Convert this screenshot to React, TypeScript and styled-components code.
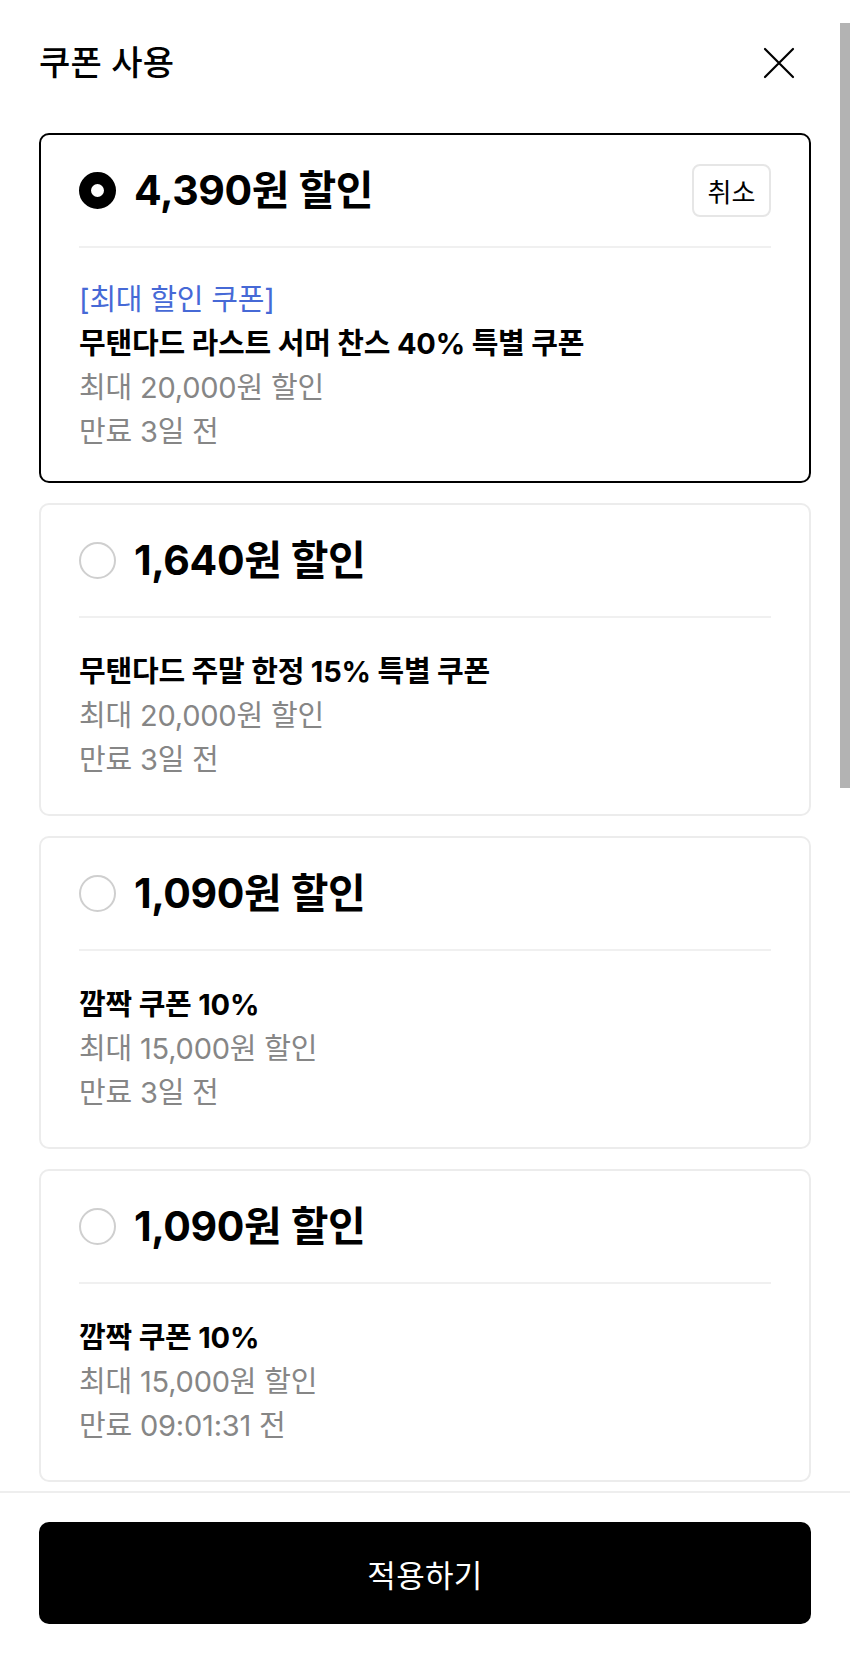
import React from "react";
import styled, { createGlobalStyle } from "styled-components";

const GlobalStyle = createGlobalStyle`
  html, body { margin: 0; padding: 0; background: #fff; }
  body { font-family: Inter, "Noto Sans CJK KR", "Noto Sans", sans-serif; color: #000; }
  * { box-sizing: border-box; }
`;

const Page = styled.div`
  position: relative;
  height: 100vh;
  display: flex;
  flex-direction: column;
  overflow: hidden;
`;

const Header = styled.header`
  height: 126px;
  flex-shrink: 0;
  display: flex;
  align-items: center;
  justify-content: space-between;
  padding: 0 47px 0 39px;
`;

const Title = styled.h1`
  margin: 0;
  font-size: 34px;
  font-weight: 500;
  letter-spacing: 0.2px;
  line-height: 1;
`;

const CloseButton = styled.button`
  width: 48px;
  height: 48px;
  padding: 0;
  border: none;
  background: none;
  display: flex;
  align-items: center;
  justify-content: center;
  cursor: pointer;
`;

const List = styled.main`
  flex: 1;
  min-height: 0;
  overflow: hidden;
  display: flex;
  flex-direction: column;
  gap: 20px;
  padding: 7px 39px 9px;
`;

const Card = styled.section<{ $selected?: boolean }>`
  flex-shrink: 0;
  border: ${(p) => (p.$selected ? "2px solid #000" : "2px solid #ececec")};
  border-radius: 10px;
  padding: 0 38px;
  background: #fff;
`;

const CardHeader = styled.div`
  height: 113px;
  display: flex;
  align-items: center;
  justify-content: space-between;
  border-bottom: 2px solid #f0f0f0;
`;

const HeaderLeft = styled.div`
  display: flex;
  align-items: center;
  gap: 18px;
`;

const Radio = styled.span<{ $checked?: boolean }>`
  width: 37px;
  height: 37px;
  border-radius: 50%;
  flex-shrink: 0;
  border: ${(p) => (p.$checked ? "12px solid #000" : "2px solid #cfcfcf")};
  background: #fff;
`;

const Amount = styled.div`
  font-size: 41px;
  font-weight: 700;
  letter-spacing: -0.4px;
  line-height: 1;
`;

const CancelButton = styled.button`
  width: 79px;
  height: 53px;
  border: 2px solid #e6e6e6;
  border-radius: 8px;
  background: #fff;
  font-family: inherit;
  font-size: 26px;
  font-weight: 400;
  color: #000;
  padding: 0;
  display: flex;
  align-items: center;
  justify-content: center;
`;

const CardBody = styled.div<{ $selected?: boolean }>`
  padding: ${(p) => (p.$selected ? "30px 0 27px" : "32px 0 32px")};
  display: flex;
  flex-direction: column;
`;

const Line = styled.div<{ $tone: "blue" | "strong" | "muted" }>`
  font-size: 29px;
  line-height: 44px;
  letter-spacing: -0.2px;
  font-weight: ${(p) => (p.$tone === "strong" ? 700 : 400)};
  color: ${(p) =>
    p.$tone === "blue" ? "#4669d6" : p.$tone === "muted" ? "#868686" : "#000"};
`;

const Footer = styled.footer`
  flex-shrink: 0;
  border-top: 2px solid #eeeeee;
  padding: 29px 39px 29px;
`;

const ApplyButton = styled.button`
  width: 100%;
  height: 102px;
  border: none;
  border-radius: 10px;
  background: #000;
  color: #fff;
  font-family: inherit;
  font-size: 31px;
  font-weight: 400;
  letter-spacing: 0.3px;
  cursor: pointer;
`;

const ScrollThumb = styled.div`
  position: absolute;
  top: 23px;
  right: 0;
  width: 10px;
  height: 765px;
  background: #b3b3b3;
`;

type Coupon = {
  amount: string;
  tag?: string;
  name: string;
  max: string;
  expiry: string;
  selected?: boolean;
};

const coupons: Coupon[] = [
  {
    amount: "4,390원 할인",
    tag: "[최대 할인 쿠폰]",
    name: "무탠다드 라스트 서머 찬스 40% 특별 쿠폰",
    max: "최대 20,000원 할인",
    expiry: "만료 3일 전",
    selected: true,
  },
  {
    amount: "1,640원 할인",
    name: "무탠다드 주말 한정 15% 특별 쿠폰",
    max: "최대 20,000원 할인",
    expiry: "만료 3일 전",
  },
  {
    amount: "1,090원 할인",
    name: "깜짝 쿠폰 10%",
    max: "최대 15,000원 할인",
    expiry: "만료 3일 전",
  },
  {
    amount: "1,090원 할인",
    name: "깜짝 쿠폰 10%",
    max: "최대 15,000원 할인",
    expiry: "만료 09:01:31 전",
  },
];

const CloseIcon = () => (
  <svg width="32" height="32" viewBox="0 0 32 32" fill="none">
    <path d="M2 2 L30 30 M30 2 L2 30" stroke="#000" strokeWidth="2.2" strokeLinecap="round" />
  </svg>
);

export default function App() {
  return (
    <>
      <GlobalStyle />
      <Page>
        <Header>
          <Title>쿠폰 사용</Title>
          <CloseButton aria-label="닫기">
            <CloseIcon />
          </CloseButton>
        </Header>
        <List>
          {coupons.map((c, i) => (
            <Card key={i} $selected={c.selected}>
              <CardHeader>
                <HeaderLeft>
                  <Radio $checked={c.selected} />
                  <Amount>{c.amount}</Amount>
                </HeaderLeft>
                {c.selected && <CancelButton>취소</CancelButton>}
              </CardHeader>
              <CardBody $selected={c.selected}>
                {c.tag && <Line $tone="blue">{c.tag}</Line>}
                <Line $tone="strong">{c.name}</Line>
                <Line $tone="muted">{c.max}</Line>
                <Line $tone="muted">{c.expiry}</Line>
              </CardBody>
            </Card>
          ))}
        </List>
        <Footer>
          <ApplyButton>적용하기</ApplyButton>
        </Footer>
        <ScrollThumb />
      </Page>
    </>
  );
}
